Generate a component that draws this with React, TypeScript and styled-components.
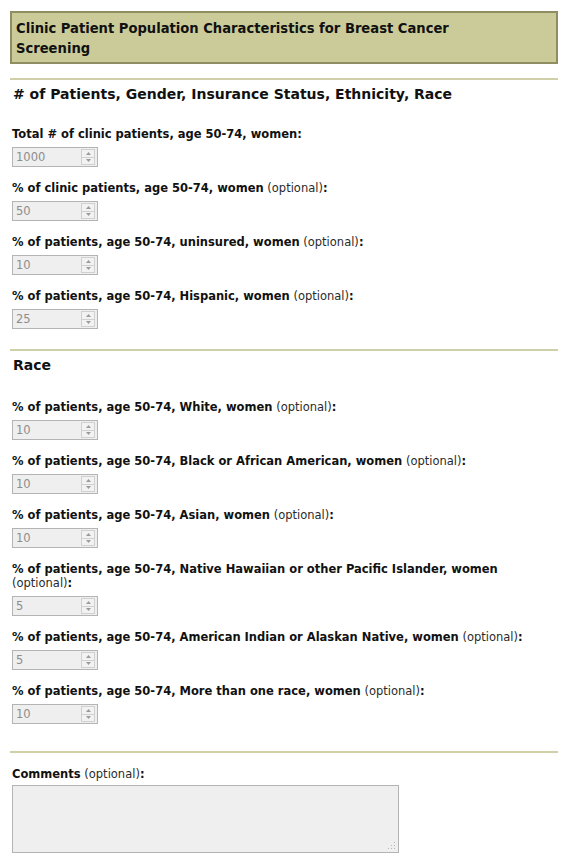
import styled, { createGlobalStyle } from "styled-components";

interface Field {
  label: string;
  value: string;
  optional: boolean;
}

const mainFields: Field[] = [
  { label: "Total # of clinic patients, age 50-74, women", value: "1000", optional: false },
  { label: "% of clinic patients, age 50-74, women", value: "50", optional: true },
  { label: "% of patients, age 50-74, uninsured, women", value: "10", optional: true },
  { label: "% of patients, age 50-74, Hispanic, women", value: "25", optional: true },
];

const raceFields: Field[] = [
  { label: "% of patients, age 50-74, White, women", value: "10", optional: true },
  { label: "% of patients, age 50-74, Black or African American, women", value: "10", optional: true },
  { label: "% of patients, age 50-74, Asian, women", value: "10", optional: true },
  {
    label: "% of patients, age 50-74, Native Hawaiian or other Pacific Islander, women",
    value: "5",
    optional: true,
  },
  { label: "% of patients, age 50-74, American Indian or Alaskan Native, women", value: "5", optional: true },
  { label: "% of patients, age 50-74, More than one race, women", value: "10", optional: true },
];

const NumberField: React.FC<{ field: Field }> = ({ field }) => (
  <FieldRow>
    <Label>
      {field.label}
      {field.optional && <Optional> (optional)</Optional>}:
    </Label>
    <Spinner>
      <SpinValue>{field.value}</SpinValue>
      <SpinButtons>
        <SpinButton>
          <svg width="5" height="3" viewBox="0 0 5 3">
            <path d="M0 3 L2.5 0 L5 3 Z" fill="#9a9a9a" />
          </svg>
        </SpinButton>
        <SpinButton>
          <svg width="5" height="3" viewBox="0 0 5 3">
            <path d="M0 0 L2.5 3 L5 0 Z" fill="#9a9a9a" />
          </svg>
        </SpinButton>
      </SpinButtons>
    </Spinner>
  </FieldRow>
);

const App: React.FC = () => {
  return (
    <>
      <GlobalStyle />
      <Page>
        <TitleBox>Clinic Patient Population Characteristics for Breast Cancer Screening</TitleBox>

        <Section $bottom={20}>
          <Heading># of Patients, Gender, Insurance Status, Ethnicity, Race</Heading>
          {mainFields.map((f) => (
            <NumberField key={f.label} field={f} />
          ))}
        </Section>

        <Section $bottom={27}>
          <Heading $after={27}>Race</Heading>
          {raceFields.map((f) => (
            <NumberField key={f.label} field={f} />
          ))}
        </Section>

        <CommentSection>
          <Label $tight>
            Comments<Optional> (optional)</Optional>:
          </Label>
          <CommentBox>
            <Comments disabled />
            <Grip width="8" height="8" viewBox="0 0 8 8">
              <g fill="#b8b8b8">
                <rect x="6" y="0" width="1" height="1" />
                <rect x="3" y="3" width="1" height="1" />
                <rect x="6" y="3" width="1" height="1" />
                <rect x="0" y="6" width="1" height="1" />
                <rect x="3" y="6" width="1" height="1" />
                <rect x="6" y="6" width="1" height="1" />
              </g>
            </Grip>
          </CommentBox>
        </CommentSection>
      </Page>
    </>
  );
};

export default App;

const GlobalStyle = createGlobalStyle`
  body {
    margin: 0;
    background: #fff;
    font-family: "DejaVu Sans", Verdana, sans-serif;
    color: #111;
  }
`;

const Page = styled.div`
  padding: 11px 6px 0 10px;
`;

const TitleBox = styled.div`
  margin-bottom: 14px;
  background: #cbcb99;
  border: 2px solid #8e8e62;
  padding: 5px 90px 4px 4px;
  font-family: "DejaVu Sans Condensed", "DejaVu Sans", sans-serif;
  font-weight: bold;
  font-size: 14.6px;
  line-height: 20px;
  color: #111;
`;

const Section = styled.div<{ $bottom: number }>`
  border-top: 2px solid #cfcfa8;
  padding: 6px 0 ${(p) => p.$bottom}px 2px;
`;

const CommentSection = styled.div`
  border-top: 2px solid #cfcfa8;
  padding: 14px 0 0 2px;
`;

const Heading = styled.h2<{ $after?: number }>`
  margin: 0 0 ${(p) => p.$after ?? 25}px 1px;
  font-size: 14px;
  line-height: 16px;
  font-weight: bold;
  color: #111;
`;

const FieldRow = styled.div`
  margin-bottom: 14px;

  &:last-child {
    margin-bottom: 0;
  }
`;

const Label = styled.div<{ $tight?: boolean }>`
  font-size: 11.5px;
  line-height: 14px;
  font-weight: bold;
  color: #111;
  margin-bottom: ${(p) => (p.$tight ? 4 : 6)}px;
`;

const Optional = styled.span`
  font-weight: normal;
  color: #2a2a2a;
`;

const Spinner = styled.div`
  display: flex;
  align-items: stretch;
  width: 84px;
  height: 18px;
  background: #efefef;
  border: 1px solid #b4b4b4;
`;

const SpinValue = styled.div`
  flex: 1;
  padding-left: 3px;
  font-size: 11.5px;
  line-height: 18px;
  color: #8d8d8d;
`;

const SpinButtons = styled.div`
  display: flex;
  flex-direction: column;
  width: 14px;
  margin: 1px 2px 1px 0;
`;

const SpinButton = styled.div`
  flex: 1;
  display: flex;
  align-items: center;
  justify-content: center;
  background: #f2f2f2;
  border: 1px solid #d0d0d0;

  & + & {
    border-top: none;
  }
`;

const CommentBox = styled.div`
  position: relative;
  width: 387px;
`;

const Comments = styled.textarea`
  display: block;
  box-sizing: border-box;
  width: 387px;
  height: 68px;
  margin: 0;
  padding: 2px;
  resize: none;
  background: #efefef;
  border: 1px solid #b4b4b4;
  font-family: "DejaVu Sans", sans-serif;
  font-size: 11px;
`;

const Grip = styled.svg`
  position: absolute;
  right: 3px;
  bottom: 3px;
`;
